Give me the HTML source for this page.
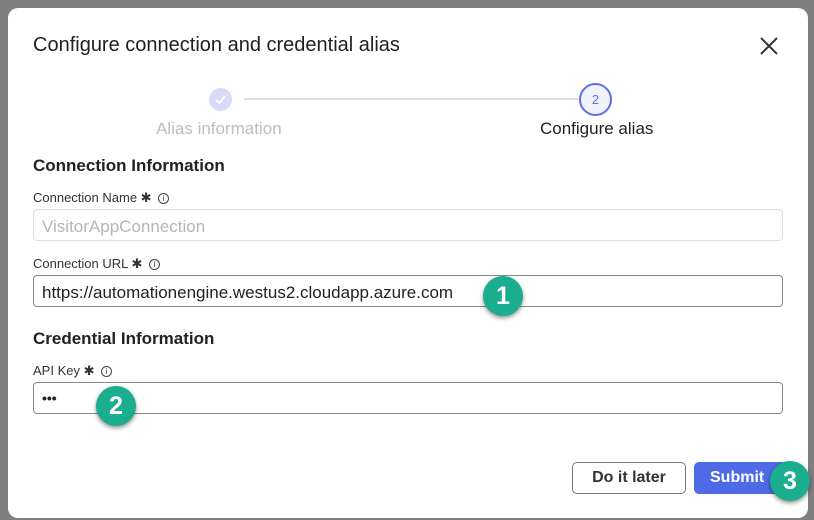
<!DOCTYPE html>
<html><head><meta charset="utf-8"><style>
body{margin:0;width:814px;height:520px;background:#7f7f7f;position:relative;overflow:hidden;font-family:"Liberation Sans",sans-serif;color:#1f1f1f}
.dlg{position:absolute;left:8px;top:8px;width:800px;height:510px;background:#fff;border-radius:10px}
.a{position:absolute;white-space:nowrap}
.title{left:25px;top:26px;font-size:20px;color:#1f1f1f;font-weight:500}
.h{font-size:17px;font-weight:bold;color:#222}
.lbl{font-size:13px;color:#333}
.inp{position:absolute;left:25px;width:750px;height:32px;border:1px solid #8a8a8a;border-radius:4px;box-sizing:border-box;font-size:17px;padding:7px 8px;color:#222}
.badge{position:absolute;width:40px;height:40px;border-radius:50%;background:#1aae8f;color:#fff;font-size:25px;font-weight:bold;text-align:center;line-height:40px;box-shadow:0 2px 4px rgba(0,0,0,.45)}
.info{display:inline-block;width:9px;height:9px;border:1px solid #444;border-radius:50%;font-size:8px;line-height:9px;text-align:center;vertical-align:1px;margin-left:3px}
</style></head><body>
<div class="dlg">
<div class="a title">Configure connection and credential alias</div>
<svg class="a" style="left:752px;top:29px" width="18" height="18"><path d="M1 1L17 17M17 1L1 17" stroke="#333" stroke-width="2"/></svg>
<div class="a" style="left:236px;top:90px;width:334px;height:2px;background:#ddd"></div>
<div class="a" style="left:201px;top:80px;width:23px;height:23px;border-radius:50%;background:#d5dbf8"></div>
<svg class="a" style="left:206px;top:85px" width="13" height="13"><path d="M2 7L5.5 10L11 3" stroke="#fff" stroke-width="2" fill="none"/></svg>
<div class="a" style="left:571px;top:75px;width:29px;height:29px;border-radius:50%;border:2px solid #5b6fe6;background:#f2f4fd;color:#5b6fe6;font-size:13px;text-align:center;line-height:29px">2</div>
<div class="a" style="left:148px;top:111px;font-size:17px;color:#bdbdbd">Alias information</div>
<div class="a" style="left:532px;top:111px;font-size:17px;color:#222">Configure alias</div>
<div class="a h" style="left:25px;top:148px">Connection Information</div>
<div class="a lbl" style="left:25px;top:182px">Connection Name ✱ <span class="info">i</span></div>
<div class="inp" style="top:201px;border-color:#ddd;color:#b5b5b5">VisitorAppConnection</div>
<div class="a lbl" style="left:25px;top:248px">Connection URL ✱ <span class="info">i</span></div>
<div class="inp" style="top:267px">https://automationengine.westus2.cloudapp.azure.com</div>
<div class="a h" style="left:25px;top:321px">Credential Information</div>
<div class="a lbl" style="left:25px;top:355px">API Key ✱ <span class="info">i</span></div>
<div class="inp" style="top:374px;font-weight:bold;font-size:14px">•••</div>
<div class="a" style="left:564px;top:454px;width:112px;height:30px;border:1px solid #777;border-radius:5px;text-align:center;line-height:30px;font-weight:bold;font-size:16px;color:#333">Do it later</div>
<div class="a" style="left:686px;top:454px;width:96px;height:32px;background:#4e6ae6;border-radius:5px;color:#fff;font-weight:bold;font-size:16px;line-height:32px;padding-left:16px;box-sizing:border-box">Submit</div>
</div>
<div class="badge" style="left:483px;top:276px">1</div>
<div class="badge" style="left:96px;top:386px">2</div>
<div class="badge" style="left:770px;top:461px">3</div>
</body></html>
